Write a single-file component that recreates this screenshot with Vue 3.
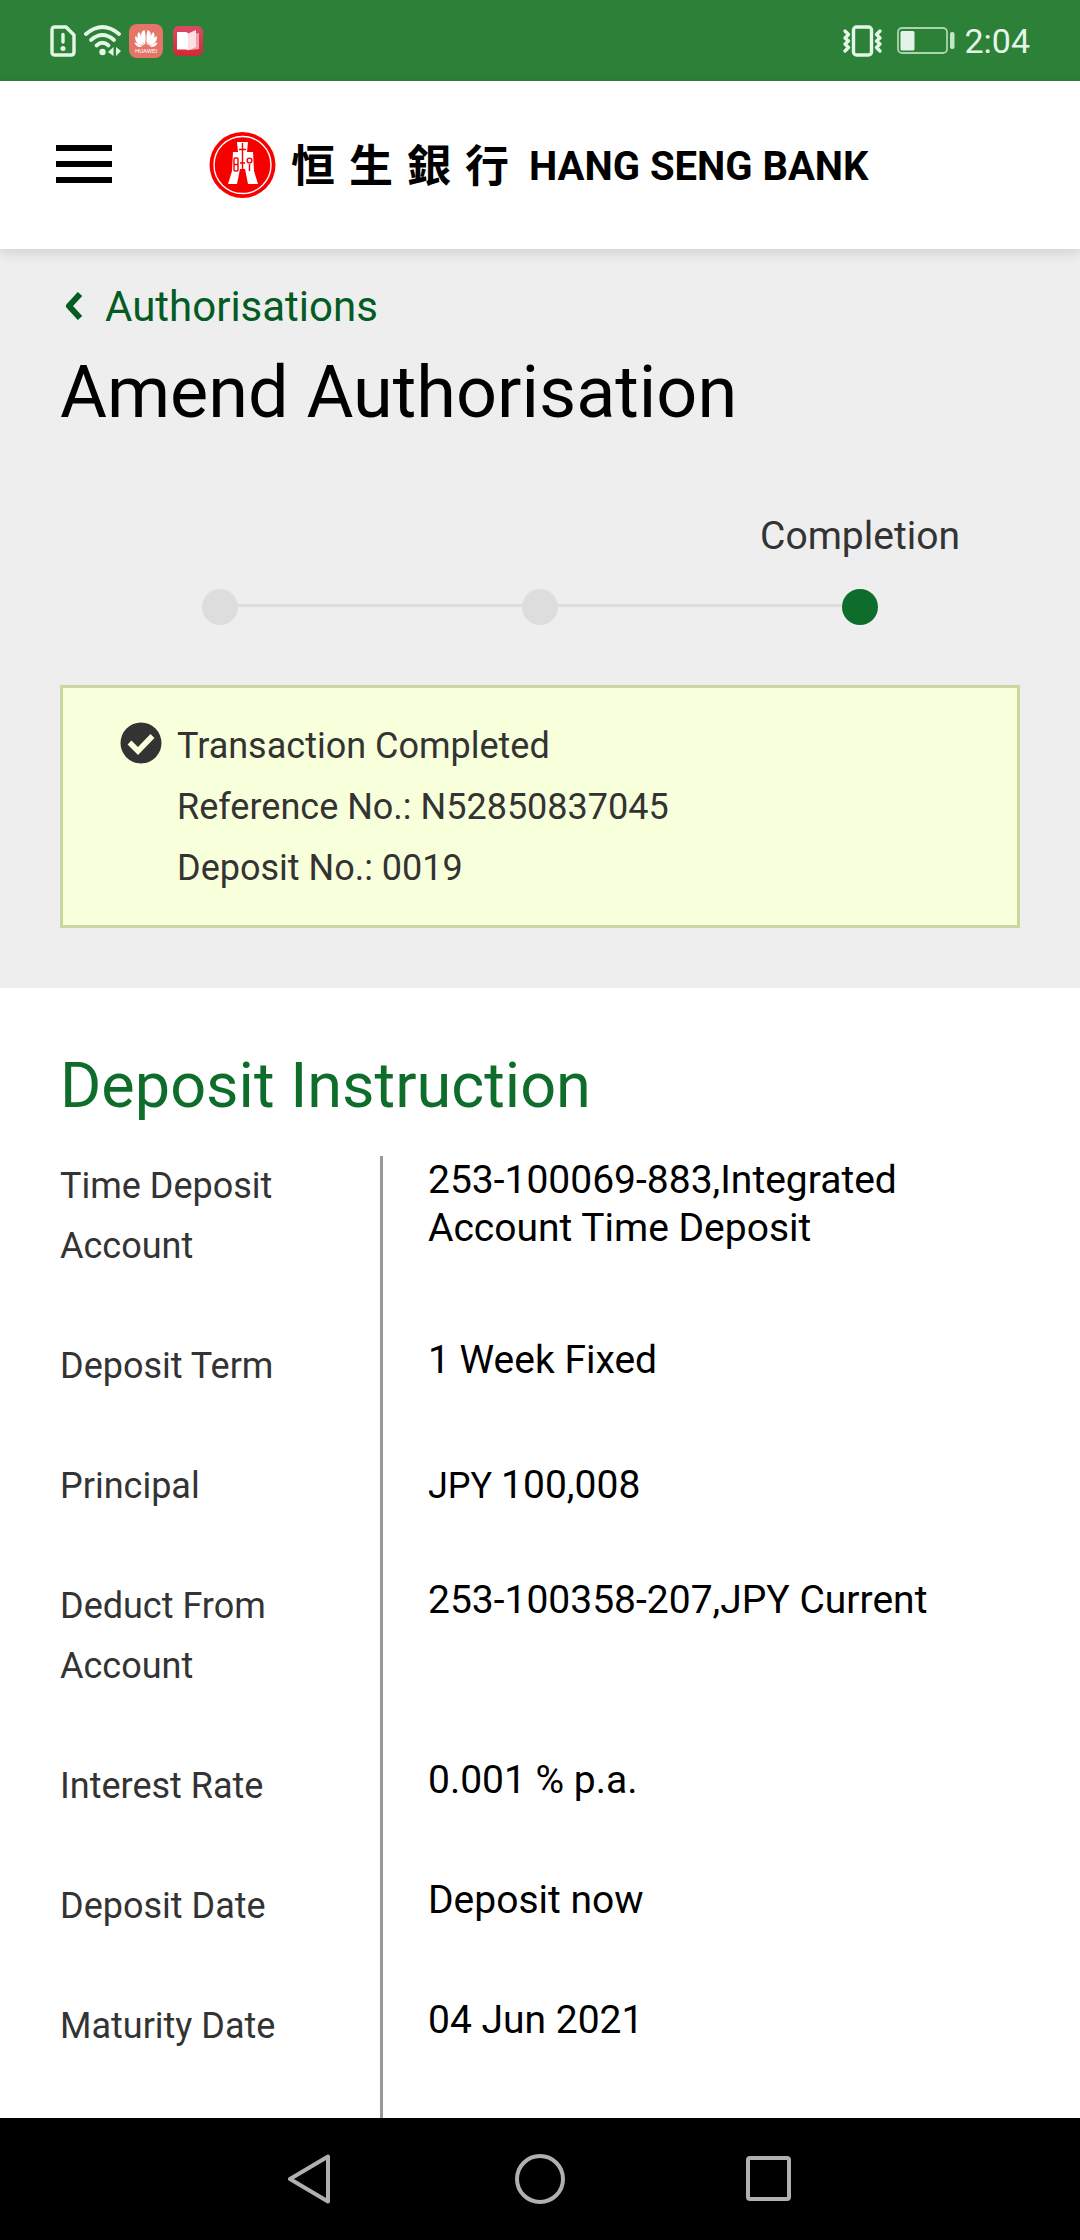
<script setup>
const steps = [
  { label: '', current: false },
  { label: '', current: false },
  { label: 'Completion', current: true },
]

const details = [
  { label: 'Time Deposit Account', value: '253-100069-883,Integrated Account Time Deposit' },
  { label: 'Deposit Term', value: '1 Week Fixed' },
  { label: 'Principal', currency: 'JPY', value: '100,008' },
  { label: 'Deduct From Account', value: '253-100358-207,JPY Current' },
  { label: 'Interest Rate', value: '0.001 % p.a.' },
  { label: 'Deposit Date', value: 'Deposit now' },
  { label: 'Maturity Date', value: '04 Jun 2021' },
]
</script>

<template>
  <div class="screen">
    <div class="status-bar">
      <div class="status-group">
        <svg class="sim" width="26" height="32" viewBox="0 0 26 32" fill="none" stroke="#e4f6e6" stroke-width="3.400" stroke-linejoin="round">
          <path d="M5 2H16L24 10V27Q24 30 21 30H5Q2 30 2 27V5Q2 2 5 2Z" />
          <path d="M13 9.500V17" stroke-linecap="round" />
          <circle cx="13" cy="23.500" r="2.500" fill="#e4f6e6" stroke="none" />
        </svg>
        <svg class="wifi" width="38" height="32" viewBox="0 0 38 32" fill="none" stroke="#e4f6e6" stroke-width="3.800" stroke-linecap="round">
          <path d="M2 9Q18.500 -5 35 9" />
          <path d="M7 15Q18.500 5 30 15" />
          <path d="M12.500 20.500Q18.500 15 24.500 20.500" />
          <circle cx="18.500" cy="27" r="3.200" fill="#e4f6e6" stroke="none" />
          <path d="M29.500 22V31L24 27ZM32 22V31L37 26Z" fill="#e4f6e6" stroke="none" />
        </svg>
        <svg class="huawei" width="34" height="34" viewBox="0 0 34 34">
          <rect width="34" height="34" rx="8" fill="#e57469" />
          <g fill="#fff">
            <path d="M16 21C11 14 11 7 15.500 6Q17.500 13 16 21Z" />
            <path d="M18 21C23 14 23 7 18.500 6Q16.500 13 18 21Z" />
            <path d="M15 21.500C8 16 7 10.500 10 8Q14 14 15 21.500Z" />
            <path d="M19 21.500C26 16 27 10.500 24 8Q20 14 19 21.500Z" />
            <path d="M14 22C8 20.500 5 16 6.500 12Q12 16 14 22Z" />
            <path d="M20 22C26 20.500 29 16 27.500 12Q22 16 20 22Z" />
            <path d="M13 23C9 23.500 6 21.500 5.500 18.500Q10 19 13 23Z" />
            <path d="M21 23C25 23.500 28 21.500 28.500 18.500Q24 19 21 23Z" />
          </g>
          <text x="17" y="29" text-anchor="middle" font-family="Roboto, sans-serif" font-size="6" fill="#fff">HUAWEI</text>
        </svg>
        <svg width="30" height="30" viewBox="0 0 30 30">
          <defs>
            <linearGradient id="book-bg" x1="0" y1="0" x2="0" y2="1">
              <stop offset="0" stop-color="#dc4a66" />
              <stop offset="1" stop-color="#d02a32" />
            </linearGradient>
          </defs>
          <rect width="30" height="30" rx="6" fill="url(#book-bg)" />
          <path d="M17 8L26 7V23L17 24Z" fill="#f0a0aa" />
          <path d="M4 6H13L15 7V24L13 23.500H4Z" fill="#fff" />
          <path d="M15 7.500L23 4V21L15 24.500Z" fill="#ffdfe2" />
        </svg>
      </div>
      <div class="status-group">
        <svg class="vibrate" width="42" height="32" viewBox="0 0 42 32" fill="none" stroke="#e4f6e6" stroke-width="3.400" stroke-linecap="round" stroke-linejoin="round">
          <rect x="11.500" y="2" width="18" height="28" rx="3" />
          <path d="M3 6L6.500 9.500L3 13L6.500 16L3 19L6.500 22.500L3 26" />
          <path d="M38 6L34.500 9.500L38 13L34.500 16L38 19L34.500 22.500L38 26" />
        </svg>
        <svg class="battery" width="58" height="28" viewBox="0 0 58 28">
          <rect x="1" y="1" width="49" height="25" rx="4" fill="none" stroke="#a9d6ae" stroke-width="1.800" />
          <rect x="3.500" y="4" width="14" height="19.500" rx="1.500" fill="#e4f3e8" />
          <rect x="53" y="5" width="4.500" height="17" rx="2" fill="#c4e6c8" />
        </svg>
        <span class="clock">2:04</span>
      </div>
    </div>

    <header class="app-header">
      <button class="menu" type="button" aria-label="Menu">
        <span></span><span></span><span></span>
      </button>
      <a class="brand" href="#">
        <svg width="68" height="68" viewBox="0 0 68 68">
          <circle cx="33.500" cy="34" r="33" fill="#f80000" />
          <circle cx="33.500" cy="34" r="28.500" fill="none" stroke="#fff" stroke-width="1.400" />
          <path d="M28 11H39L38 21H44L45 40L49 53H39L36 38H31L28 53H19L23 40L24 21H29Z" fill="#fff" />
          <g fill="none" stroke="#f80000" stroke-width="1.400">
            <path d="M33.500 12V39M30 18.500H37M31 32H36" />
            <rect x="25" y="27" width="4" height="13" rx="1" />
            <path d="M25 33.500H29M40.500 33V40" />
            <circle cx="40.500" cy="29.500" r="2.400" />
          </g>
        </svg>
        <span class="brand-zh" lang="zh-Hant"><span>恒</span><span>生</span><span>銀</span><span>行</span></span>
        <span class="brand-en">HANG SENG BANK</span>
      </a>
    </header>

    <section class="intro">
      <a class="back" href="#">
        <svg width="24" height="28" viewBox="0 0 24 28" fill="none" stroke="#045c22" stroke-width="6" stroke-linejoin="round">
          <path d="M20 2L9 14L20 26" />
        </svg>
        <span>Authorisations</span>
      </a>
      <h1>Amend Authorisation</h1>

      <ol class="steps">
        <li v-for="(step, i) in steps" :key="i" :class="{ current: step.current }">
          <span class="step-label">{{ step.label }}</span>
          <span class="track">
            <span class="segment"></span>
            <span class="dot"></span>
            <span class="segment"></span>
          </span>
        </li>
      </ol>

      <div class="notice" role="status">
        <svg width="42" height="42" viewBox="0 0 42 42">
          <circle cx="21" cy="21" r="20.500" fill="#333" />
          <path d="M9.500 20.500L18 29L32.500 14" fill="none" stroke="#f8ffdb" stroke-width="5.500" />
        </svg>
        <div>
          <p>Transaction Completed</p>
          <p>Reference No.: N52850837045</p>
          <p>Deposit No.: 0019</p>
        </div>
      </div>
    </section>

    <section class="instruction">
      <h2>Deposit Instruction</h2>
      <dl>
        <div v-for="row in details" :key="row.label" class="row">
          <dt>{{ row.label }}</dt>
          <dd v-if="row.currency" class="money">{{ row.currency }} <span>{{ row.value }}</span></dd>
          <dd v-else>{{ row.value }}</dd>
        </div>
      </dl>
    </section>

    <nav class="system-nav" aria-label="System">
      <button type="button" aria-label="Back">
        <svg width="50" height="50" viewBox="0 0 50 50"><path d="M43 2.500V47.500L5 25Z" /></svg>
      </button>
      <button type="button" aria-label="Home">
        <svg width="50" height="50" viewBox="0 0 50 50"><circle cx="25" cy="25" r="23" /></svg>
      </button>
      <button type="button" aria-label="Recent apps">
        <svg width="50" height="50" viewBox="0 0 50 50"><rect x="3" y="4" width="41" height="41" rx="2" /></svg>
      </button>
    </nav>
  </div>
</template>

<style>
body {
  margin: 0;
  background: #fff;
}
</style>

<style scoped>
.screen {
  display: flex;
  flex-direction: column;
  min-height: 100vh;
  font-family: Roboto, "Noto Sans CJK TC", sans-serif;
  color: #333;
}

svg {
  display: block;
  flex: none;
}

h1, h2, p, ol, dl, dd {
  margin: 0;
  padding: 0;
  font-weight: 400;
}

a {
  color: inherit;
  text-decoration: none;
}

button {
  padding: 0;
  border: 0;
  background: none;
}

.status-bar {
  display: flex;
  align-items: center;
  justify-content: space-between;
  box-sizing: border-box;
  height: 81px;
  padding: 0 50px;
  background: #2d8038;
}

.status-group {
  display: flex;
  align-items: center;
}

.sim {
  margin-right: 8px;
}

.wifi {
  margin-right: 7px;
}

.huawei {
  margin-right: 10px;
}

.vibrate {
  margin-right: 13px;
}

.battery {
  margin-right: 9px;
}

.clock {
  font-size: 34px;
  line-height: 42px;
  color: #e4f6e6;
}

.app-header {
  position: relative;
  display: flex;
  align-items: center;
  box-sizing: border-box;
  height: 168px;
  padding: 0 56px 2px;
  background: #fff;
  box-shadow: 0 3px 12px rgba(0, 0, 0, 0.14);
}

.menu {
  display: flex;
  flex-direction: column;
  gap: 10px;
  width: 56px;
}

.menu span {
  height: 6px;
  background: #000;
}

.brand {
  display: flex;
  align-items: center;
  margin-left: 97px;
  padding-top: 2px;
  color: #000;
}

.brand-zh {
  display: flex;
  gap: 14px;
  margin-left: 14px;
  padding-bottom: 4px;
  font-family: "Noto Sans CJK TC", sans-serif;
  font-size: 44px;
  font-weight: 700;
  line-height: 60px;
}

.brand-en {
  margin-left: 20px;
  padding-top: 4px;
  font-size: 40px;
  font-weight: 700;
  line-height: 48px;
  white-space: nowrap;
}

.intro {
  padding: 28px 60px 60px;
  background: #eee;
}

.back {
  display: inline-flex;
  align-items: center;
  gap: 21px;
  font-size: 42px;
  line-height: 60px;
  color: #045c22;
  vertical-align: top;
}

.back svg {
  margin-bottom: 2px;
}

h1 {
  margin-top: 14px;
  font-size: 72px;
  line-height: 84px;
  color: #000;
}

.steps {
  display: flex;
  margin-top: 71px;
  list-style: none;
}

.steps li {
  flex: 1;
}

.step-label {
  display: block;
  height: 60px;
  font-size: 39px;
  line-height: 60px;
  text-align: center;
}

.track {
  display: flex;
  align-items: center;
  margin-top: 23px;
}

.segment {
  flex: 1;
  height: 3px;
  margin-bottom: 3px;
  background: #ddd;
}

.steps li:first-child .segment:first-child,
.steps li:last-child .segment:last-child {
  background: none;
}

.dot {
  width: 36px;
  height: 36px;
  border-radius: 50%;
  background: #ddd;
}

.current .dot {
  background: #0f6d2b;
}

.notice {
  display: flex;
  gap: 15px;
  margin-top: 60px;
  padding: 28px 57px 26px;
  border: 3px solid #c9d8a0;
  background: #f8ffdb;
  font-size: 36px;
  line-height: 61px;
}

.notice svg {
  margin-top: 6px;
}

.instruction {
  flex: 1;
  display: flex;
  flex-direction: column;
  padding: 60px 60px 0;
}

h2 {
  margin-bottom: 33px;
  font-size: 63px;
  line-height: 75px;
  color: #0f6d2b;
}

dl {
  flex: 1;
  display: flex;
  flex-direction: column;
}

.row {
  display: flex;
}

.row:last-child {
  flex: 1;
}

dt {
  flex: none;
  box-sizing: border-box;
  width: 33.333%;
  padding-bottom: 60px;
  font-size: 36px;
  line-height: 60px;
}

dd {
  flex: 1;
  padding-left: 45px;
  border-left: 3px solid #999;
  font-size: 39px;
  line-height: 48px;
  color: #000;
}

.money {
  font-size: 36px;
  line-height: 60px;
}

.money span {
  font-size: 39px;
  line-height: 48px;
}

.system-nav {
  display: flex;
  align-items: center;
  justify-content: center;
  gap: 180px;
  height: 122px;
  background: #000;
}

.system-nav svg {
  fill: none;
  stroke: #b0b0b0;
  stroke-width: 4;
  stroke-linejoin: round;
}
</style>
